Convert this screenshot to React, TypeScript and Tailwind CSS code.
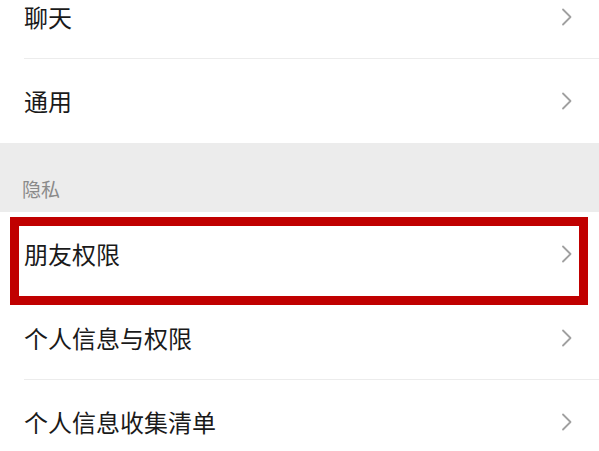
import React from 'react';

const font = { fontFamily: '"Noto Sans CJK SC", "Noto Sans", sans-serif' };

function Chevron() {
  return (
    <svg width="12" height="18" viewBox="0 0 12 18" fill="none" className="shrink-0">
      <path d="M2 1.5 L9.5 9 L2 16.5" stroke="#a0a0a0" strokeWidth="1.8" strokeLinecap="round" strokeLinejoin="round" />
    </svg>
  );
}

function Row({ label, divider = true, highlight = false }: { label: string; divider?: boolean; highlight?: boolean }) {
  return (
    <div className="relative bg-white">
      <div className="flex h-[83px] items-center justify-between pl-[24px] pr-[26px]">
        <span className="text-[24px] leading-none text-[#1a1a1a]">{label}</span>
        <Chevron />
      </div>
      {divider ? <div className="ml-[24px] h-px bg-[#ececec]" /> : <div className="h-px bg-white" />}
      {highlight && (
        <div className="pointer-events-none absolute left-[10px] right-[11px] top-[5px] bottom-[-9px] z-10 border-[9px] border-[#c00000]" />
      )}
    </div>
  );
}

export default function App() {
  return (
    <div className="h-[451px] w-[599px] overflow-hidden bg-white" style={font}>
      <div className="mt-[-25px]">
        <Row label="聊天" />
        <Row label="通用" divider={false} />
        <div className="flex h-[69px] items-end bg-[#ececec] pb-[14px] pl-[22px]">
          <span className="text-[19px] leading-none text-[#8a8a8a]">隐私</span>
        </div>
        <Row label="朋友权限" divider={false} highlight />
        <Row label="个人信息与权限" />
        <Row label="个人信息收集清单" />
      </div>
    </div>
  );
}
